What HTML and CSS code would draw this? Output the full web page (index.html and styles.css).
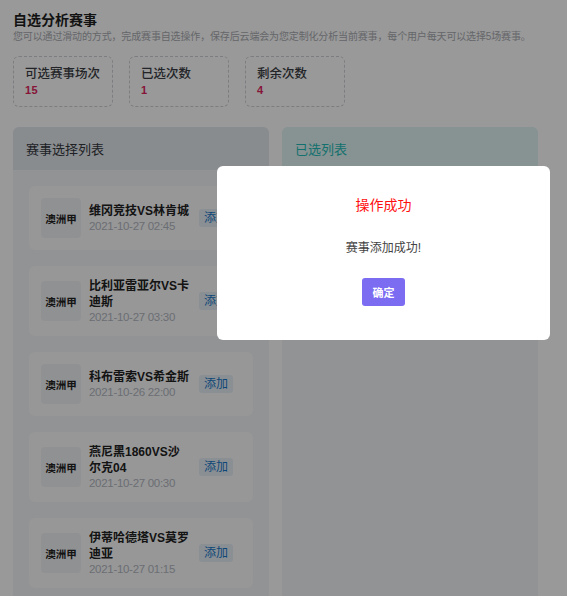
FILE: index.html
```html
<!DOCTYPE html>
<html lang="zh">
<head>
<meta charset="utf-8">
<title>自选分析赛事</title>
<link rel="stylesheet" href="styles.css">
</head>
<body>
<div class="page">
  <h1 class="title">自选分析赛事</h1>
  <p class="subtitle">您可以通过滑动的方式，完成赛事自选操作，保存后云端会为您定制化分析当前赛事，每个用户每天可以选择5场赛事。</p>

  <div class="stats">
    <div class="stat">
      <div class="stat-label">可选赛事场次</div>
      <div class="stat-value">15</div>
    </div>
    <div class="stat">
      <div class="stat-label">已选次数</div>
      <div class="stat-value">1</div>
    </div>
    <div class="stat">
      <div class="stat-label">剩余次数</div>
      <div class="stat-value">4</div>
    </div>
  </div>

  <div class="panels">
    <section class="panel">
      <div class="panel-head">赛事选择列表</div>
      <div class="panel-body">
        <div class="match">
          <div class="league">澳洲甲</div>
          <div class="match-info">
            <div class="match-name">维冈竞技VS林肯城</div>
            <div class="match-time">2021-10-27 02:45</div>
          </div>
          <button class="add">添加</button>
        </div>
        <div class="match">
          <div class="league">澳洲甲</div>
          <div class="match-info">
            <div class="match-name">比利亚雷亚尔VS卡迪斯</div>
            <div class="match-time">2021-10-27 03:30</div>
          </div>
          <button class="add">添加</button>
        </div>
        <div class="match">
          <div class="league">澳洲甲</div>
          <div class="match-info">
            <div class="match-name">科布雷索VS希金斯</div>
            <div class="match-time">2021-10-26 22:00</div>
          </div>
          <button class="add">添加</button>
        </div>
        <div class="match">
          <div class="league">澳洲甲</div>
          <div class="match-info">
            <div class="match-name">燕尼黑1860VS沙尔克04</div>
            <div class="match-time">2021-10-27 00:30</div>
          </div>
          <button class="add">添加</button>
        </div>
        <div class="match">
          <div class="league">澳洲甲</div>
          <div class="match-info">
            <div class="match-name">伊蒂哈德塔VS莫罗迪亚</div>
            <div class="match-time">2021-10-27 01:15</div>
          </div>
          <button class="add">添加</button>
        </div>
      </div>
    </section>
    <section class="panel panel-selected">
      <div class="panel-head">已选列表</div>
      <div class="panel-body"></div>
    </section>
  </div>
</div>

<div class="mask"></div>
<div class="dialog">
  <div class="dialog-title">操作成功</div>
  <div class="dialog-msg">赛事添加成功!</div>
  <button class="dialog-btn">确定</button>
</div>
</body>
</html>
```

FILE: styles.css
```css
* { box-sizing: border-box; }

html, body {
  margin: 0;
  padding: 0;
  height: 100%;
  overflow: hidden;
  background: #ffffff;
  font-family: "Liberation Sans", "Noto Sans CJK SC", sans-serif;
  color: #333;
}

.page {
  width: 525px;
  margin-left: 13px;
  padding-top: 10px;
}

.title {
  margin: 0;
  font-size: 14px;
  line-height: 20px;
  font-weight: 700;
  color: #1f1f1f;
}

.subtitle {
  margin: 0;
  font-size: 10px;
  line-height: 14px;
  letter-spacing: -0.15px;
  color: #a9abb0;
  white-space: nowrap;
}

.stats {
  display: flex;
  gap: 16px;
  margin-top: 12px;
}

.stat {
  width: 100px;
  height: 51px;
  border: 1px dashed #cfd1d5;
  border-radius: 6px;
  padding: 8px 11px 0;
}

.stat-label {
  font-size: 12.5px;
  line-height: 18px;
  color: #3a3d44;
  font-weight: 500;
  white-space: nowrap;
}

.stat-value {
  font-size: 11px;
  line-height: 14px;
  font-weight: 700;
  color: #e0245e;
  letter-spacing: 0.5px;
}

.panels {
  display: grid;
  grid-template-columns: 256px 256px;
  gap: 13px;
  margin-top: 20px;
}

.panel {
  border-radius: 6px 6px 0 0;
  overflow: hidden;
  background: #f4f5f8;
}

.panel-head {
  height: 43px;
  padding-left: 13px;
  display: flex;
  align-items: center;
  font-size: 13px;
  color: #34373d;
  background: #e5e9ef;
}

.panel-selected .panel-head {
  background: #dff5f3;
  color: #1fbcb8;
}

.panel-body {
  padding: 16px;
  display: flex;
  flex-direction: column;
  gap: 16px;
  min-height: 460px;
}

.match {
  display: flex;
  align-items: center;
  background: #fcfcfd;
  border-radius: 6px;
  padding: 12px 12px;
  min-height: 64px;
}

.league {
  width: 40px;
  height: 40px;
  flex: none;
  border-radius: 4px;
  background: #f1f2f5;
  display: flex;
  align-items: center;
  justify-content: center;
  font-size: 10.5px;
  font-weight: 700;
  color: #222;
}

.match-info {
  width: 102px;
  flex: none;
  margin-left: 8px;
}

.match-name {
  font-size: 12px;
  line-height: 16px;
  font-weight: 700;
  color: #222;
}

.match-time {
  font-size: 11.5px;
  line-height: 14px;
  letter-spacing: -0.3px;
  color: #b3b8c1;
}

.add {
  margin-left: 8px;
  border: none;
  border-radius: 3px;
  background: #e7eff7;
  color: #1677c8;
  font-family: inherit;
  font-size: 12px;
  line-height: 17px;
  padding: 0 5px;
  height: 18px;
}

.mask {
  position: fixed;
  inset: 0;
  background: rgba(0, 0, 0, 0.4);
}

.dialog {
  position: absolute;
  left: 217px;
  top: 166px;
  width: 333px;
  height: 174px;
  background: #fff;
  border-radius: 6px;
  display: flex;
  flex-direction: column;
  align-items: center;
  padding-top: 29px;
}

.dialog-title {
  font-size: 14px;
  line-height: 20px;
  color: #ff1010;
}

.dialog-msg {
  margin-top: 25px;
  font-size: 12px;
  line-height: 16px;
  color: #444;
}

.dialog-btn {
  margin-top: 22px;
  width: 43px;
  height: 28px;
  border: none;
  border-radius: 3px;
  background: #7b6cf2;
  color: #fff;
  font-family: inherit;
  font-size: 11px;
  font-weight: 700;
  padding: 0;
}
```
